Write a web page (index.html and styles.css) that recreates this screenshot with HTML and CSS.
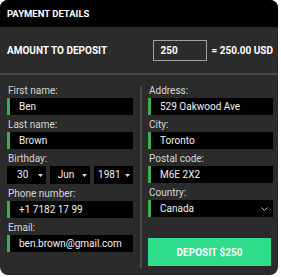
FILE: index.html
```html
<!DOCTYPE html>
<html lang="en">
<head>
    <meta charset="UTF-8">
    <meta name="viewport" content="width=device-width, initial-scale=1.0">
    <title>Payment Details</title>
    <link rel="stylesheet" href="styles.css">
</head>
<body>
    <div class="card">
        <!-- Header -->
        <div class="card-header">PAYMENT DETAILS</div>

        <!-- Amount row -->
        <div class="amount-row">
            <span class="amount-label">AMOUNT TO DEPOSIT</span>
            <input class="amount-input" type="text" value="250">
            <span class="amount-total">= 250.00 USD</span>
        </div>

        <!-- Form columns -->
        <div class="form-body">
            <div class="col col-left">
                <label class="field-label">First name:</label>
                <div class="field">Ben</div>

                <label class="field-label">Last name:</label>
                <div class="field">Brown</div>

                <label class="field-label">Birthday:</label>
                <div class="birthday">
                    <div class="select-box"><span class="select-value">30</span><svg class="caret" width="5" height="3" viewBox="0 0 5 3"><path d="M0 0 H5 L2.5 3 Z" fill="#ddd"/></svg></div>
                    <div class="select-box"><span class="select-value">Jun</span><svg class="caret" width="5" height="3" viewBox="0 0 5 3"><path d="M0 0 H5 L2.5 3 Z" fill="#ddd"/></svg></div>
                    <div class="select-box"><span class="select-value">1981</span><svg class="caret" width="5" height="3" viewBox="0 0 5 3"><path d="M0 0 H5 L2.5 3 Z" fill="#ddd"/></svg></div>
                </div>

                <label class="field-label">Phone number:</label>
                <div class="field">+1 7182 17 99</div>

                <label class="field-label">Email:</label>
                <div class="field">ben.brown@gmail.com</div>
            </div>

            <div class="divider"></div>

            <div class="col col-right">
                <label class="field-label">Address:</label>
                <div class="field">529 Oakwood Ave</div>

                <label class="field-label">City:</label>
                <div class="field">Toronto</div>

                <label class="field-label">Postal code:</label>
                <div class="field">M6E 2X2</div>

                <label class="field-label">Country:</label>
                <div class="field field-select">
                    Canada
                    <svg class="chevron" width="7" height="4" viewBox="0 0 7 4">
                        <path d="M0.5 0.5 L3.5 3.5 L6.5 0.5" fill="none" stroke="#bbb" stroke-width="1"/>
                    </svg>
                </div>

                <button class="deposit-btn">DEPOSIT $250</button>
            </div>
        </div>
    </div>
</body>
</html>
```

FILE: styles.css
```css
* {
    margin: 0;
    padding: 0;
    box-sizing: border-box;
}

body {
    background: #fff;
    font-family: Roboto, "Liberation Sans", sans-serif;
}

.card {
    width: 278px;
    height: 275px;
    background: #2b2b2b;
    border-radius: 8px;
    overflow: hidden;
    color: #fff;
}

/* Header */
.card-header {
    height: 27px;
    background: #000;
    padding-left: 7px;
    font-size: 9.5px;
    font-weight: bold;
    line-height: 28px;
}

/* Amount row */
.amount-row {
    height: 48px;
    display: flex;
    align-items: center;
    padding: 0 5px 0 7px;
    border-bottom: 2px solid #47474d;
}

.amount-label {
    font-size: 10px;
    font-weight: bold;
    flex: 1;
}

.amount-input {
    width: 54px;
    height: 21px;
    background: #2b2b2b;
    border: 1px solid #a0a0a0;
    color: #fff;
    font-family: inherit;
    font-size: 10px;
    font-weight: bold;
    padding-left: 6px;
    margin-right: 4px;
    outline: none;
}

.amount-total {
    font-size: 10px;
    font-weight: bold;
}

/* Columns */
.form-body {
    display: flex;
    padding-top: 6px;
}

.col {
    display: flex;
    flex-direction: column;
}

.col-left {
    width: 140px;
    padding: 0 7px;
}

.divider {
    width: 2px;
    height: 182px;
    margin-top: 5px;
    background: #47474d;
}

.col-right {
    flex: 1;
    padding: 0 5px 0 6px;
}

.field-label {
    font-size: 10px;
    color: #d6d6d6;
    height: 17px;
    padding-top: 3px;
    line-height: 14px;
    padding-left: 1px;
}

.field {
    height: 17px;
    background: #000;
    border-left: 3px solid #3fae4a;
    font-size: 10px;
    line-height: 17px;
    padding-left: 9px;
    color: #f2f2f2;
}

.field-select {
    display: flex;
    justify-content: space-between;
    align-items: center;
    padding-right: 5px;
}

.birthday {
    display: flex;
    gap: 4px;
}

.select-box {
    flex: 1;
    height: 18px;
    background: #000;
    font-size: 10px;
    line-height: 18px;
    padding-right: 3px;
    display: flex;
    align-items: center;
    color: #f2f2f2;
}

.select-value {
    flex: 1;
    text-align: center;
}

.deposit-btn {
    margin-top: 21px;
    width: 123px;
    height: 28px;
    background: #2edc8a;
    border: none;
    color: #fff;
    font-family: inherit;
    font-size: 10px;
    font-weight: bold;
}
```
